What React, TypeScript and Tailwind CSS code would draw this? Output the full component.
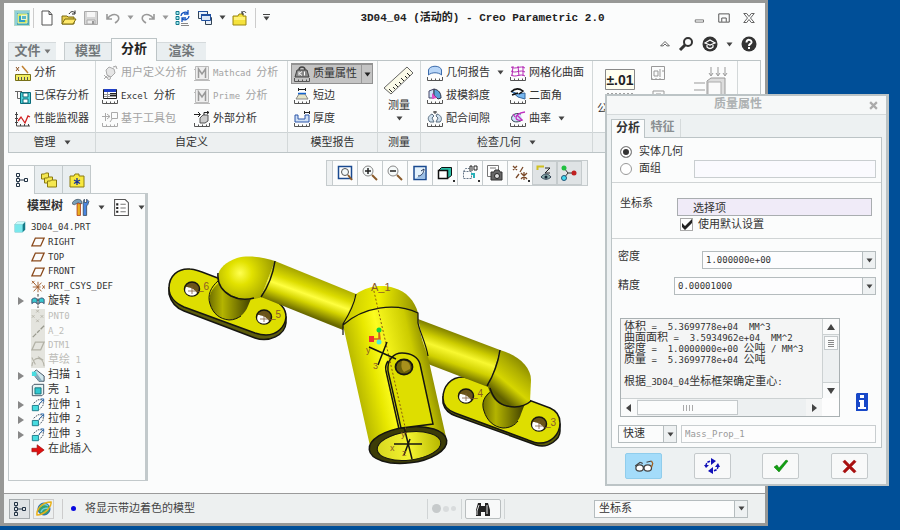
import type { ReactNode } from 'react';

// Latin runs sit at half the width of a CJK glyph, so they get the smaller mono size
function T({ children }: { children: string }) {
  const parts = children.split(/([\x20-\x7e]+)/);
  return (
    <>
      {parts.map((p, i) =>
        i % 2 ? (
          <span key={i} className="font-['DejaVu_Sans_Mono',monospace] text-[9px] whitespace-pre">
            {p}
          </span>
        ) : (
          p
        )
      )}
    </>
  );
}

function Svg({ children, size = 16, className = '' }: { children: ReactNode; size?: number; className?: string }) {
  return (
    <svg width={size} height={size} viewBox="0 0 16 16" fill="none" className={`shrink-0 ${className}`} aria-hidden="true">
      {children}
    </svg>
  );
}

function Down({ color = '#444' }: { color?: string }) {
  return (
    <svg width="7" height="5" viewBox="0 0 7 5" className="shrink-0" aria-hidden="true">
      <path d="M.5 .5h6L3.500 4.500z" fill={color} />
    </svg>
  );
}

function Ruler({ color = '#555' }: { color?: string }) {
  return <path d="M.5 12v3.500h15V12M4.500 13.500v2M8.500 13.500v2M12.500 13.500v2" stroke={color} />;
}

const icons = {
  app: (
    <>
      <path d="M0 0h16v16H0z" fill="#b5d8c8" />
      <path d="M1 1h14v14H1z" fill="#4aa9b8" />
      <path d="M1 1h14v2H1zM1 1h2v14H1z" fill="#8fd0d8" />
      <path d="M4 4h9v9H4z" fill="#c8e040" stroke="#e8f4b0" />
      <path d="M5 6h6v6H5z" fill="#2da0c8" />
      <path d="M7 5h6v5H7z" fill="#eaf6d0" />
      <path d="M8 6h4v3H8z" fill="#58b8c8" />
    </>
  ),
  newFile: <path d="M3 1h7l3 3.500V15H3zM10 1v3.500h3" fill="#fff" stroke="#555" />,
  open: (
    <>
      <path d="M1 6h5l1 1h6v7H1z" fill="#e8cf50" stroke="#7a6a10" />
      <path d="M1 14l3-5h11l-3 5z" fill="#ffe96b" stroke="#7a6a10" />
      <path d="M8 4c2-3 4-3 6-1M14 .5V4h-3" stroke="#222" />
    </>
  ),
  save: (
    <>
      <path d="M1.500 1.500h13v13h-13z" fill="#d6d6d6" stroke="#aaa" />
      <path d="M4 2h8v5H4z" fill="#f6f6f6" />
      <path d="M4 10h8v4H4z" fill="#eee" stroke="#aaa" />
      <path d="M9 11h2v3H9z" fill="#999" />
    </>
  ),
  undo: <path d="M2 4v5h5M2.500 8.500C5 5 10 3 13 6c2 3 0 5-3 7" stroke="#999" strokeWidth="1.600" />,
  redo: <path d="M14 4v5H9M13.500 8.500C11 5 6 3 3 6c-2 3 0 5 3 7" stroke="#999" strokeWidth="1.600" />,
  regen: (
    <>
      <path d="M1 1.500h3v3H1zM1 6.500h3v3H1zM1 11.500h3v3H1z" fill="#9fe8f0" stroke="#157a8c" />
      <path d="M6 13.500h7M6 15.500h8" stroke="#888" />
      <path d="M6 6c0-3 4-5 7-3M13 0v4H9M14 6c0 3-4 5-7 3M7 12V8h4" stroke="#1554c0" strokeWidth="1.300" />
    </>
  ),
  windows: (
    <>
      <path d="M1.500 1.500h9v7h-9zM8.500 7.500h6v7h-6z" fill="#e8f0fa" stroke="#345" />
      <path d="M4.500 4.500h9v6h-9z" fill="#dce8f8" stroke="#2050a0" />
      <path d="M4 4h10v2H4zM1 1h10v1H1z" fill="#2050a0" />
    </>
  ),
  folder: (
    <>
      <path d="M1 6h5l1-2h4v2h3v9H1z" fill="#f5e23c" stroke="#9a8612" />
      <path d="M2 7h11v3H2z" fill="#fff27a" />
      <path d="M10 3c1-2 3-2 4 0M10 1v3h2" stroke="#333" />
    </>
  ),
  analysis: (
    <>
      <path d="M1 2l3 4M4 2L1 6" stroke="#8a5020" />
      <path d="M7 1l6 7" stroke="#c08030" strokeWidth="1.500" />
      <path d="M.500 9.500h15v6H.500z" fill="#f0ec60" stroke="#777018" />
      <path d="M3.500 12v3M6.500 12v3M9.500 12v3M12.500 12v3" stroke="#555" />
    </>
  ),
  saved: (
    <>
      <path d="M0 3.500h7M2.500 3.500v7h4" stroke="#666" />
      <path d="M5.500 4.500h10v11h-10z" fill="#4cd0d8" stroke="#0a6a78" />
      <path d="M8 5h5v4H8zM8 11h5v4H8z" fill="#fff" stroke="#0a6a78" />
    </>
  ),
  monitor: (
    <>
      <path d="M1.500 1v14H15M0 3.500h3M0 7.500h3M0 11.500h3M5.500 13v2M9.500 13v2M13.500 13v2" stroke="#444" />
      <path d="M3 10l3-4 4 6 3-7 2 1" stroke="#d02020" strokeWidth="1.300" />
    </>
  ),
  userDef: (
    <>
      <path d="M4 5l3-3 5 2 1 4-4 4-4-2zM11 2l3-1 1 3M2 10l3 3M2 14l4-4" stroke="#aaa" fill="#e6e6e6" />
      <circle cx="7" cy="13" r="1.500" stroke="#aaa" />
    </>
  ),
  excel: (
    <>
      <path d="M1.500 1.500h13v9h-13z" fill="#fff" stroke="#222" />
      <path d="M2 1h12v3H2z" fill="#2040c8" />
      <path d="M8 5h6v3H8z" fill="#222" />
      <path d="M2 6.500h12M2 8.500h12M5.500 4v6" stroke="#999" />
      <Ruler />
    </>
  ),
  toolkit: (
    <>
      <path d="M9.500 1.500h6v6h-6zM0 5.500h8M5 3l3 2.500L5 8M3.500 2v8M10 8l-2 3" stroke="#aaa" />
      <Ruler color="#aaa" />
    </>
  ),
  mathcad: (
    <>
      <path d="M1.500 1.500h13v13h-13z" fill="#eee" stroke="#bbb" />
      <path d="M4.500 13V4l3.500 5 3.500-5v9" stroke="#999" strokeWidth="1.500" />
      <path d="M0 15.500h16M0 4.500h2" stroke="#bbb" />
    </>
  ),
  external: (
    <>
      <path d="M6 7l3-3h5v6l-3 2H6z" fill="#ccc" stroke="#555" />
      <path d="M0 3.500h6M4 1l2.500 2.500L4 6M10 4V1.500h5M13 0l2 1.500L13 3" stroke="#222" />
      <Ruler />
    </>
  ),
  mass: (
    <>
      <path d="M5 4c0-4 6-4 6 0" stroke="#444" strokeWidth="1.500" />
      <path d="M3 4h10l2 7H1z" fill="#888" stroke="#444" />
      <path d="M5 5.500v4M8 5.500l-2.500 2L8 9.500M10.500 5.500v4" stroke="#fff" />
      <Ruler />
    </>
  ),
  short: (
    <>
      <path d="M4.500 0v3M11.500 0v3M5 1.500h6" stroke="#222" />
      <path d="M5 6h6l3 5H2z" fill="#e4e4c8" stroke="#888" />
      <path d="M4 5.500h8" stroke="#1565d0" strokeWidth="1.500" />
      <Ruler />
    </>
  ),
  thick: (
    <>
      <path d="M1 4h3v4h7V4h4v7H1z" fill="#cfe0f5" stroke="#2a55a8" />
      <path d="M10.500 0v3M15.500 0v3M11 1.500h4" stroke="#222" />
      <Ruler />
    </>
  ),
  geom: (
    <>
      <path d="M1.500 10V5c1-5 12-5 13 0v5c-3-3-10-3-13 0z" fill="#b8d6f8" stroke="#3d6cac" />
      <Ruler />
    </>
  ),
  draft: (
    <>
      <path d="M2 3l5-2v9H2z" fill="#cfe4f8" stroke="#446" />
      <path d="M7 1c5 1 7 4 7 9l-3 1-4-4z" fill="#58a0d8" stroke="#334" />
      <path d="M5 5l5 5-5 1z" fill="#e050c8" />
      <Ruler />
    </>
  ),
  clearance: (
    <>
      <path d="M5 3C1 5 0 8 3 11h4L5 7l2-2zM10 3c4 1 6 5 3 8H9l2-4-2-2z" fill="#cfe0ee" stroke="#5a6e80" />
      <path d="M6 1h4M8 0v3" stroke="#333" />
      <Ruler />
    </>
  ),
  mesh: (
    <>
      <path d="M1 2c5 3 9-2 14 1M1 6c5 3 9-2 14 1M1 10c5 3 9-2 14 1M3 1l-1 10M8 1l1 10M13 1v10" stroke="#b428b4" />
      <Ruler />
    </>
  ),
  dihedral: (
    <>
      <path d="M1 3l7 3 7-1v6L8 9z" fill="#78b8f0" stroke="#3468a0" />
      <path d="M1 4c4-4 8-4 12-1l-4 3M2 7l6-2" stroke="#111" strokeWidth="1.500" />
      <Ruler />
    </>
  ),
  curvature: (
    <>
      <path d="M11 3C5 1 0 5 2 9c2 3 8 2 10 0" fill="#cfe4f8" stroke="#345" />
      <path d="M15 1C9 2 6 4 6 7c0 2 4 3 7 2M7 4l5 5M5 6l-2-3" stroke="#c030c0" strokeWidth="1.300" />
      <Ruler />
    </>
  ),
  treeNodes: <path d="M2.500 1.500h3v3h-3zM2.500 6.500h3v3h-3zM2.500 11.500h3v3h-3zM10.500 6.500h3v3h-3zM4 4.500v2M4 9.500v2M5.500 8h5" stroke="#234" />,
  folders: (
    <g fill="#f5e850" stroke="#8a7a10">
      <path d="M.500 2h3l1-1h3v6h-7z" />
      <path d="M3.500 6h3l1-1h4v6h-8z" />
      <path d="M6.500 9h3l1-1h5v7h-9z" />
    </g>
  ),
  favorite: (
    <>
      <path d="M1 4h4l1-2h4v2h5v11H1z" fill="#f8e83c" stroke="#8a7a10" />
      <path d="M8 6v7M5 8l6 3.500M11 8l-6 3.500" stroke="#14309c" strokeWidth="1.300" />
    </>
  ),
  tools: (
    <>
      <path d="M0 5c1-3 5-5 8-3l1 3H7L6 4 2 6z" fill="#7aa0b8" stroke="#456" strokeWidth=".700" />
      <path d="M4.500 5h3v10.500h-3z" fill="#e8b020" stroke="#b03010" strokeWidth=".700" />
      <path d="M10 5V3l1-2v3h2V1l2 2-1 3-1 1v8.500h-3V7z" fill="#4a86e0" stroke="#345" strokeWidth=".700" />
    </>
  ),
  list: (
    <>
      <path d="M1.500.500h10l3 3v12h-13z" fill="#fff" stroke="#555" />
      <path d="M3 5h2M3 8.500h2M3 12h2" stroke="#222" strokeWidth="2" />
      <path d="M7 5h5M7 8.500h5M7 12h5" stroke="#777" />
    </>
  ),
  part: (
    <>
      <path d="M2 5l3-3h9v9l-3 3H2z" fill="#147a88" />
      <path d="M2 5h9v9H2z" fill="#7ae8ec" />
      <path d="M2 5l3-3h9l-3 3z" fill="#c8fafa" />
    </>
  ),
  plane: <path d="M5 3.500h10L11 12.500H1z" stroke="#8a4a1c" strokeWidth="1.500" />,
  csys: <path d="M8 2v12M2 8h9M3 3l9 10M12 3L3 13M13 6l3 4M16 6l-3 4M1 1l3 3M4 1L1 4" stroke="#9a5220" />,
  revolve: (
    <>
      <path d="M1 6c3-2 4-2 6 0v5c-2-2-4-2-6 0zM9 6c3-2 4-2 6 0v5c-2-2-4-2-6 0z" fill="#38c8d0" stroke="#346" />
      <path d="M8 0v3M8 5v3M8 10v3M8 14v2" stroke="#222" />
    </>
  ),
  points: <path d="M6 1l3 3M9 1L6 4M1 7l3 3M4 7l-3 3M11 7l3 3M14 7l-3 3M6 12l3 3M9 12l-3 3" stroke="#b2b1a6" />,
  axis: <path d="M2 15l4-4M7 10l3-3M11 6l4-4" stroke="#99998e" strokeWidth="1.500" />,
  planeOff: <path d="M5 3.500h10L11 12.500H1z" stroke="#b2b1a6" strokeWidth="1.500" />,
  sketch: <path d="M1 14c1-12 13-12 14 0M1 4l4 8M8 3l6 4" stroke="#b2b1a6" strokeWidth="1.200" />,
  sweep: (
    <>
      <path d="M2 5l4-4 9 7v6H9z" fill="#cfe6ec" stroke="#345" />
      <path d="M2 5l4-1 7 10H9z" fill="#8ab" />
      <path d="M1 3h5v5H1z" fill="#48dce0" />
    </>
  ),
  shell: (
    <>
      <path d="M1.500 3.500l2-2h11v11l-2 2h-11z" fill="#e8f4f4" stroke="#345" />
      <path d="M4.500 5.500h7v7h-7z" fill="#30c8d0" stroke="#156a74" />
    </>
  ),
  extrude: (
    <>
      <path d="M1.500 8.500h7v6h-7z" fill="#48dce0" stroke="#157080" />
      <path d="M3 6l5-4h6v6l-4 5M9 8l5-6" stroke="#345" strokeDasharray="2 1" />
      <path d="M9 7l5-5M11 1h3.500v3.500" stroke="#2a6ab0" />
    </>
  ),
  insert: <path d="M1 6h6V2l8 6-8 6v-4H1z" fill="#e01010" stroke="#900" strokeWidth=".700" />,
  fit: (
    <>
      <path d="M1.500 1.500h13v12h-13z" stroke="#1a4a90" strokeWidth="1.500" fill="#fff" />
      <circle cx="8" cy="7" r="3.500" stroke="#555" fill="#f2f8fa" />
      <path d="M11 10l4 5" stroke="#8a5a2a" strokeWidth="2" />
    </>
  ),
  zoomIn: (
    <>
      <circle cx="6" cy="6" r="5" stroke="#888" fill="#f6fafa" />
      <path d="M3 6h6M6 3v6" stroke="#222" strokeWidth="1.500" />
      <path d="M10 10l5 5" stroke="#8a5a2a" strokeWidth="2" />
    </>
  ),
  zoomOut: (
    <>
      <circle cx="6" cy="6" r="5" stroke="#888" fill="#f6fafa" />
      <path d="M3 6h6" stroke="#222" strokeWidth="1.500" />
      <path d="M10 10l5 5" stroke="#8a5a2a" strokeWidth="2" />
    </>
  ),
  repaint: (
    <>
      <path d="M2 1.500h12v13H2z" fill="#e4f2fc" stroke="#1a4a90" strokeWidth="1.500" />
      <path d="M3 14l10-7v7z" fill="#9cc0e6" />
      <path d="M6 11c4 0 6-4 6-7M9 6l3-2" stroke="#235" />
    </>
  ),
  display: (
    <>
      <path d="M1.500 5.500l3-3h10v8l-4 3" fill="#28c0a8" stroke="#111" />
      <path d="M1.500 5.500h9v8h-9z" fill="#fff" stroke="#111" strokeWidth="1.500" />
    </>
  ),
  orient: (
    <>
      <path d="M1.500 6.500h8v7h-8zM1.500 6.500l2-3h4" stroke="#678" strokeDasharray="2 1" />
      <path d="M8 6V1h2v5M12 1h3v4h-3z" stroke="#222" />
      <path d="M9 9h3v4" stroke="#28b0b8" strokeWidth="2" />
    </>
  ),
  camera: (
    <>
      <path d="M.5 .5h11v11H.5zM3 3h6" fill="#fff" stroke="#777" />
      <path d="M4 7h3l1-2h4l1 2h2v8H4z" fill="#666" stroke="#333" />
      <circle cx="10" cy="11" r="2.500" fill="#ddd" stroke="#222" />
    </>
  ),
  datum: <path d="M1 1l4 4M5 1L1 5M4 13l3-4M8 7l3-5M9 8l6 6M15 8l-6 6M12 7v8" stroke="#7a4a2a" strokeWidth="1.300" />,
  annotate: (
    <>
      <path d="M8 1.500H1.500V5" stroke="#d0c020" strokeWidth="2" />
      <path d="M9 3h5l-5 5h5" stroke="#222" />
      <path d="M5 12c3-4 7-4 10 0-3 3-7 3-10 0z" fill="#8aa" stroke="#345" />
      <circle cx="10" cy="12" r="1.500" fill="#123" />
    </>
  ),
  spin: (
    <>
      <path d="M3 3l4 5-4 5M7 8h6" stroke="#333" />
      <circle cx="3" cy="3" r="2.500" fill="#20c040" />
      <circle cx="3" cy="13" r="2.500" fill="#40d8f0" stroke="#257" />
      <circle cx="13" cy="8" r="2.500" fill="#c02020" />
    </>
  ),
  globe: (
    <>
      <circle cx="8" cy="8" r="6" fill="#38a070" stroke="#2060b0" />
      <path d="M4 6c2-3 6-3 8-1M5 11c2-5 5-3 7-4" stroke="#6cd0e0" strokeWidth="1.500" />
      <path d="M1 14C0 8 7 1 15 1c1 5-7 13-14 13z" stroke="#e8b018" strokeWidth="1.500" />
    </>
  ),
  binoculars: (
    <>
      <path d="M3 2h3v3h4V2h3l2 7v6h-5v-4H6v4H1V9z" fill="#222" />
      <path d="M4 4l-2 6v4M12 4v9" stroke="#ddd" />
    </>
  ),
  glasses: (
    <>
      <path d="M1 8l4-3M7 10c1-1 1-1 2 0M5 5l2 1M10 5l4-1" stroke="#444" />
      <ellipse cx="4.500" cy="9.500" rx="3" ry="2.500" fill="#fff" stroke="#444" />
      <ellipse cx="11" cy="9.500" rx="3" ry="2.500" fill="#fff" stroke="#444" />
      <path d="M14 4l1 2-1 3" stroke="#a06020" />
    </>
  ),
  repeat: (
    <>
      <path d="M2 8c0-4 3-5 6-5M14 8c0 4-3 5-6 5" stroke="#1010b8" strokeWidth="1.500" strokeDasharray="3 1" />
      <path d="M7 0l5 3-5 4zM9 9l-5 4 5 3zM0 7h5L2 10zM11 9l3-4 2 4z" fill="#1010b8" />
    </>
  ),
  ok: <path d="M1 9l3-2 2 3 7-8 2 1-9 11z" fill="#10a010" stroke="#087008" strokeWidth=".500" />,
  cancel: <path d="M3 1l5 5 5-5 2 2-5 5 5 5-2 2-5-5-5 5-2-2 5-5-5-5z" fill="#a81010" stroke="#a81010" strokeWidth=".600" />,
};

type IconName = keyof typeof icons;

function Icon({ name, size, className }: { name: IconName; size?: number; className?: string }) {
  return (
    <Svg size={size} className={className}>
      {icons[name]}
    </Svg>
  );
}

function QuickButton({ name, label }: { name: IconName; label: string }) {
  return (
    <button aria-label={label} className="flex w-[22px] justify-center">
      <Icon name={name} />
    </button>
  );
}

function RibbonItem({ name, label, disabled = false, menu = false }: { name: IconName; label: string; disabled?: boolean; menu?: boolean }) {
  return (
    <button disabled={disabled} className="flex h-[23px] items-center gap-[3px] whitespace-nowrap disabled:text-[#a3a3a3]">
      <Icon name={name} />
      <span>
        <T>{label}</T>
      </span>
      {menu && (
        <span className="ml-1">
          <Down />
        </span>
      )}
    </button>
  );
}

function Group({ title, menu = false, className, children }: { title: string; menu?: boolean; className: string; children: ReactNode }) {
  return (
    <section className={`flex shrink-0 flex-col border-r border-[#d3d8d9] ${className}`}>
      <div className="flex h-[71px] px-[6px]">{children}</div>
      <h2 className="flex h-5 items-center justify-center gap-2 border-t border-[#cdd3d5] bg-[#edf0f1]">
        {title}
        {menu && <Down />}
      </h2>
    </section>
  );
}

function TitleBar() {
  return (
    <header className="flex h-[35px] items-center pr-[10px] pb-[6px] pl-[7px]">
      <QuickButton name="app" label="Creo" />
      <span className="mr-[2px] h-5 border-l border-[#ccc]" />
      <QuickButton name="newFile" label="新建" />
      <QuickButton name="open" label="打开" />
      <QuickButton name="save" label="保存" />
      <QuickButton name="undo" label="撤消" />
      <span className="flex w-[13px] justify-center">
        <Down color="#999" />
      </span>
      <QuickButton name="redo" label="重做" />
      <span className="flex w-[13px] justify-center">
        <Down color="#999" />
      </span>
      <QuickButton name="regen" label="重新生成" />
      <QuickButton name="windows" label="窗口" />
      <span className="flex w-[13px] justify-center">
        <Down />
      </span>
      <QuickButton name="folder" label="关闭" />
      <span className="mx-1 h-5 border-l border-[#ccc]" />
      <button aria-label="自定义" className="flex w-3 flex-col items-center gap-px">
        <span className="w-[7px] border-t border-[#444]" />
        <Down />
      </button>
      <h1 className="flex-1 text-center font-bold whitespace-nowrap text-[#222]">3D04_04 (活动的) - Creo Parametric 2.0</h1>
      <div className="flex items-center gap-[13px]">
        <button aria-label="最小化">
          <Svg size={12}>
            <path d="M3 10.500h11v3H3z" stroke="#555" />
          </Svg>
        </button>
        <button aria-label="最大化">
          <Svg size={12}>
            <path d="M1 2.500h14v11H1zM5 13V8h6v5" stroke="#555" strokeWidth="1.300" />
          </Svg>
        </button>
        <button aria-label="关闭窗口">
          <Svg size={12}>
            <path d="M1 2h4l3 4 3-4h4l-5 6 5 6h-4l-3-4-3 4H1l5-6z" stroke="#555" strokeWidth="1.200" />
          </Svg>
        </button>
      </div>
    </header>
  );
}

function RibbonTabs() {
  return (
    <nav className="flex h-[22px] pl-1 text-[13px] font-bold text-[#72777a]">
      <button className="mt-1 mr-2 flex w-12 items-center justify-center gap-[3px] border-t border-l border-[#d5dadc] bg-[#e9eef0]">
        <span>文件</span>
        <Down color="#777" />
      </button>
      <button className="mt-1 w-[47px] border-t border-l border-[#c6ccce] bg-[#e9eef0]">模型</button>
      <button className="relative -mb-px w-[46px] border border-b-0 border-[#bcc4c6] bg-[#fbfcfc] text-[#222]">分析</button>
      <button className="mt-1 w-[49px] border-t border-[#d5dadc] bg-[#e9eef0]">渲染</button>
      <div className="ml-auto flex h-3 items-center gap-2 pr-2">
        <Svg size={10}>
          <path d="M1 11l7-7 7 7h-4L8 8l-3 3z" stroke="#444" strokeWidth="1.300" />
        </Svg>
        <Svg>
          <circle cx="10" cy="6" r="4" stroke="#333" strokeWidth="2" />
          <path d="M7 9l-5 5" stroke="#333" strokeWidth="3" />
        </Svg>
        <Svg>
          <circle cx="8" cy="8" r="7.500" fill="#333" />
          <path d="M3 7l5-3 5 3-5 2zM5 9v2c2 2 4 2 6 0V9" stroke="#fff" fill="#333" strokeWidth="1.200" />
        </Svg>
        <Down />
        <Svg>
          <circle cx="8" cy="8" r="7.500" fill="#333" />
          <path d="M5.500 6.500c0-4 5.500-3 5 0C10 8 8 8 8 10M8 11v2" stroke="#fff" strokeWidth="2" />
        </Svg>
      </div>
    </nav>
  );
}

function Ribbon() {
  return (
    <div className="mr-1 ml-1 flex overflow-hidden border border-[#bcc4c6]">
      <Group title="管理" menu className="w-[87px]">
        <div>
          <RibbonItem name="analysis" label="分析" />
          <RibbonItem name="saved" label="已保存分析" />
          <RibbonItem name="monitor" label="性能监视器" />
        </div>
      </Group>
      <Group title="自定义" className="w-48">
        <div className="w-[92px]">
          <RibbonItem name="userDef" label="用户定义分析" disabled />
          <RibbonItem name="excel" label="Excel 分析" />
          <RibbonItem name="toolkit" label="基于工具包" disabled />
        </div>
        <div>
          <RibbonItem name="mathcad" label="Mathcad 分析" disabled />
          <RibbonItem name="mathcad" label="Prime 分析" disabled />
          <RibbonItem name="external" label="外部分析" />
        </div>
      </Group>
      <Group title="模型报告" className="w-[90px]">
        <div>
          <div className="mt-[2px] -ml-[3px] flex h-[21px] border border-t-2 border-[#929292] bg-[#c4c4c4]">
            <button className="flex w-[69px] items-center gap-[3px] pl-[2px]">
              <Icon name="mass" />
              质量属性
            </button>
            <button aria-label="质量属性选项" className="flex w-[11px] items-center justify-center border-l border-[#999]">
              <Down color="#222" />
            </button>
          </div>
          <RibbonItem name="short" label="短边" />
          <RibbonItem name="thick" label="厚度" />
        </div>
      </Group>
      <Group title="测量" className="w-[43px]">
        <button className="flex w-full flex-col items-center gap-1 pt-[5px]">
          <svg width="32" height="30" viewBox="0 0 32 30" aria-hidden="true">
            <path d="M1 22L24 1l6 6L8 28z" fill="#fafae8" stroke="#666" />
            <path d="M9 26l-3-3M12 23l-2-2M15 21l-3-3M18 18l-2-2M21 15l-3-3M24 12l-2-2M27 10l-3-3" stroke="#222" />
          </svg>
          <span className="leading-3">测量</span>
          <Down />
        </button>
      </Group>
      <Group title="检查几何" menu className="w-[172px]">
        <div className="w-[83px]">
          <RibbonItem name="geom" label="几何报告" menu />
          <RibbonItem name="draft" label="拔模斜度" />
          <RibbonItem name="clearance" label="配合间隙" />
        </div>
        <div>
          <RibbonItem name="mesh" label="网格化曲面" />
          <RibbonItem name="dihedral" label="二面角" />
          <RibbonItem name="curvature" label="曲率" menu />
        </div>
      </Group>
      <Group title="" className="w-[145px]">
        <div className="flex flex-col gap-1 pt-2 pl-[6px]">
          <svg width="30" height="28" viewBox="0 0 30 28" aria-hidden="true">
            <path d="M.5.500h29v20H.500z" fill="#fffff0" stroke="#888" />
            <text x="15" y="16" textAnchor="middle" fontSize="14" fontWeight="bold" fill="#222" fontFamily="Liberation Sans, sans-serif">
              ±.01
            </text>
            <path d="M1 27h28M3 24v3M7 24v3M11 24v3M15 24v3M19 24v3M23 24v3M27 24v3" stroke="#444" />
          </svg>
          <span className="-ml-2">公差</span>
        </div>
        <div className="ml-[15px] flex flex-col gap-[7px] pt-1">
          <Svg>
            <path d="M1.500 1.500h13v13h-13zM4 6h4v5H4zM10 4v8M12 6h2M2 15v-2M6 15v-2M10 15v-2" stroke="#999" />
          </Svg>
          <Svg>
            <path d="M3 3h11v11H3zM6 6h5v5H6z" stroke="#999" />
          </Svg>
        </div>
        <svg width="36" height="40" viewBox="0 0 36 40" className="mt-[6px] ml-7" aria-hidden="true">
          <path d="M17 0v8M24 0v8M31 0v8M15 6l2 3 2-3M22 6l2 3 2-3M29 6l2 3 2-3M0 16h11M0 23h11M0 30h11" stroke="#999" fill="none" />
          <path d="M13 14l4-3h14v29H13z" fill="#ddd" stroke="#999" />
          <path d="M14 15h13v25H14z" fill="#fafafa" stroke="#aaa" />
        </svg>
      </Group>
    </div>
  );
}

type TreeNode = { icon: IconName; label: string; expand?: boolean; off?: boolean };

const tree: TreeNode[] = [
  { icon: 'plane', label: 'RIGHT' },
  { icon: 'plane', label: 'TOP' },
  { icon: 'plane', label: 'FRONT' },
  { icon: 'csys', label: 'PRT_CSYS_DEF' },
  { icon: 'revolve', label: '旋转 1', expand: true },
  { icon: 'points', label: 'PNT0', off: true },
  { icon: 'axis', label: 'A_2', off: true },
  { icon: 'planeOff', label: 'DTM1', off: true },
  { icon: 'sketch', label: '草绘 1', off: true },
  { icon: 'sweep', label: '扫描 1', expand: true },
  { icon: 'shell', label: '壳 1' },
  { icon: 'extrude', label: '拉伸 1', expand: true },
  { icon: 'extrude', label: '拉伸 2', expand: true },
  { icon: 'extrude', label: '拉伸 3', expand: true },
  { icon: 'insert', label: '在此插入' },
];

function ModelTree() {
  return (
    <aside className="flex w-[140px] shrink-0 flex-col pt-3 pb-3">
      <div className="flex h-7">
        <button aria-label="模型树" className="relative -mb-px flex w-[27px] items-center justify-center border border-b-0 border-[#c2c9cb] bg-[#fbfcfc]">
          <Icon name="treeNodes" />
        </button>
        <button aria-label="文件夹浏览器" className="flex w-7 items-center justify-center border-t border-r border-[#c2c9cb] bg-[#e9eef0]">
          <Icon name="folders" />
        </button>
        <button aria-label="收藏夹" className="flex w-7 items-center justify-center border-t border-r border-[#c2c9cb] bg-[#e9eef0]">
          <Icon name="favorite" />
        </button>
      </div>
      <div className="flex-1 border border-r-[3px] border-[#c2c9cb]">
        <div className="flex h-[26px] items-center pl-[18px]">
          <h2 className="text-xs font-bold">模型树</h2>
          <button aria-label="设置" className="ml-[9px] flex items-center gap-2">
            <Icon name="tools" size={18} />
            <Down />
          </button>
          <button aria-label="显示" className="ml-2 flex items-center gap-2">
            <Icon name="list" size={17} />
            <Down />
          </button>
        </div>
        <ul className="grid h-[237px] auto-rows-fr leading-none">
          <li className="flex items-center gap-1 pl-1">
            <Icon name="part" size={14} />
            <span>
              <T>3D04_04.PRT</T>
            </span>
          </li>
          {tree.map((node) => (
            <li key={node.label} className={`flex items-center pl-[9px] ${node.off ? 'text-[#bdbdb8]' : ''}`}>
              <span className="flex w-[13px]">
                {node.expand && (
                  <svg width="6" height="8" viewBox="0 0 6 8" aria-hidden="true">
                    <path d="M0 0l6 4-6 4z" fill="#888" />
                  </svg>
                )}
              </span>
              <span className={`flex items-center self-stretch ${node.off ? 'bg-[#e4e4de]' : ''}`}>
                <Icon name={node.icon} size={14} />
              </span>
              <span className="ml-[3px] whitespace-nowrap">
                <T>{node.label}</T>
              </span>
            </li>
          ))}
        </ul>
      </div>
    </aside>
  );
}

const viewTools: { icon: IconName; label: string; pressed?: boolean; more?: boolean }[] = [
  { icon: 'fit', label: '重新调整' },
  { icon: 'zoomIn', label: '放大' },
  { icon: 'zoomOut', label: '缩小' },
  { icon: 'repaint', label: '重画' },
  { icon: 'display', label: '显示样式', more: true },
  { icon: 'orient', label: '已命名视图', more: true },
  { icon: 'camera', label: '视图管理器' },
  { icon: 'datum', label: '基准显示', more: true },
  { icon: 'annotate', label: '注释显示', pressed: true },
  { icon: 'spin', label: '旋转中心', pressed: true },
];

function Hole({ x, y }: { x: number; y: number }) {
  return (
    <g>
      <ellipse cx={x} cy={y} rx="7.500" ry="7" fill="#6a5418" stroke="#151510" strokeWidth="1.500" />
      <path d={`M${x - 6} ${y - 2}c3 0 9 2 11 6-2 3-6 3-8 2-3-1-5-4-3-8z`} fill="#fff" />
      <path d={`M${x - 4} ${y + 2}h9M${x} ${y - 3}v8`} stroke="#806040" strokeWidth=".800" />
    </g>
  );
}

function Model() {
  return (
    <svg width="410" height="230" viewBox="160 240 410 230" fill="none" role="img" aria-label="3D04_04">
      <defs>
        <linearGradient id="pipeL" gradientUnits="userSpaceOnUse" x1="315" y1="276" x2="302" y2="312">
          <stop offset="0" stopColor="#a8a800" />
          <stop offset=".3" stopColor="#dcdc00" />
          <stop offset=".5" stopColor="#ffff40" />
          <stop offset=".7" stopColor="#d4d400" />
          <stop offset="1" stopColor="#686800" />
        </linearGradient>
        <linearGradient id="pipeR" gradientUnits="userSpaceOnUse" x1="468" y1="336" x2="454" y2="376">
          <stop offset="0" stopColor="#808000" />
          <stop offset=".25" stopColor="#cccc00" />
          <stop offset=".45" stopColor="#f8f830" />
          <stop offset=".7" stopColor="#d0d000" />
          <stop offset="1" stopColor="#5c5c00" />
        </linearGradient>
        <radialGradient id="elbowL" gradientUnits="userSpaceOnUse" cx="240" cy="272" r="34">
          <stop offset="0" stopColor="#ffff50" />
          <stop offset=".35" stopColor="#e2e200" />
          <stop offset="1" stopColor="#a0a000" />
        </radialGradient>
        <linearGradient id="elbowR" gradientUnits="userSpaceOnUse" x1="528" y1="354" x2="496" y2="392">
          <stop offset="0" stopColor="#707000" />
          <stop offset=".4" stopColor="#b0b000" />
          <stop offset=".7" stopColor="#d6d600" />
          <stop offset="1" stopColor="#606000" />
        </linearGradient>
        <linearGradient id="boss" x1="0" y1="0" x2="1" y2="0">
          <stop offset="0" stopColor="#707000" />
          <stop offset=".3" stopColor="#b4b400" />
          <stop offset=".6" stopColor="#808000" />
          <stop offset="1" stopColor="#383800" />
        </linearGradient>
        <linearGradient id="body" gradientUnits="userSpaceOnUse" x1="356" y1="385" x2="438" y2="366">
          <stop offset="0" stopColor="#b8b800" />
          <stop offset=".25" stopColor="#e8e800" />
          <stop offset=".4" stopColor="#fcfc20" />
          <stop offset=".75" stopColor="#cccc00" />
          <stop offset="1" stopColor="#747400" />
        </linearGradient>
        <linearGradient id="dome" gradientUnits="userSpaceOnUse" x1="352" y1="300" x2="418" y2="305">
          <stop offset="0" stopColor="#d0d000" />
          <stop offset=".4" stopColor="#f0f000" />
          <stop offset="1" stopColor="#909000" />
        </linearGradient>
        <linearGradient id="bore" gradientUnits="userSpaceOnUse" x1="378" y1="440" x2="440" y2="440">
          <stop offset="0" stopColor="#d8d820" />
          <stop offset=".5" stopColor="#f4f430" />
          <stop offset="1" stopColor="#b8b800" />
        </linearGradient>
      </defs>

      {/* left mounting plate */}
      <g stroke="#151510" strokeWidth="1.500">
        <path d="M169 287v6c2 8 7 14 15 17l71 27c14 5 30-3 31-15v-6z" fill="#5c5c0c" />
        <path d="M169 287c0-12 9-20 21-19 5 0 8 2 12 3l68 26c10 4 16 11 16 19-1 10-9 18-20 18-4 0-8-1-11-2l-71-26c-9-4-15-11-15-19z" fill="#dede00" />
      </g>
      <Hole x={192} y={288} />
      <Hole x={264} y={316} />
      <path d="M219 282c-8 6-11 13-9 21 3 10 10 15 19 16 9 0 16-6 19-14l5-12z" fill="url(#boss)" />
      <path d="M218 280c-7 6-11 14-8 23 3 10 10 15 19 16 5 0 9-2 12-4" stroke="#151510" />
      <path d="M261 296l-10-3-20 2 10 5z" fill="#5c5c00" />
      <path d="M275 260l81 33-13 36-82-33z" fill="url(#pipeL)" />
      <path d="M218 280c-2-12 8-19 19-23 11-3 25-1 38 3l-14 36c-9 4-21 3-30-2-7-4-12-9-13-14z" fill="url(#elbowL)" />
      <path d="M218 272c-1 10 4 18 13 23 8 4 16 4 23 2M275 260c-2 13-7 26-14 36" stroke="#151510" strokeWidth="1.500" />

      {/* right mounting plate */}
      <g stroke="#151510" strokeWidth="1.500">
        <path d="M443 396v6c2 8 7 11 13 13l80 29c13 4 24-6 24-14v-7z" fill="#5c5c0c" />
        <path d="M443 397c0-12 8-21 20-21 4 0 8 2 12 3l75 28c7 3 10 9 10 15 0 11-9 21-22 20-4 0-7-2-10-3l-73-27c-8-3-12-9-12-15z" fill="#dede00" />
      </g>
      <Hole x={466} y={395} />
      <Hole x={539} y={423} />
      <path d="M492 389c-8 5-11 13-8 21 3 10 10 16 19 17 9 0 16-6 18-14l5-13z" fill="url(#boss)" />
      <path d="M492 390c-8 5-11 12-8 20 3 10 10 16 19 17 7 0 12-3 15-7" stroke="#151510" />
      <path d="M418 318l82 31-12 37-60-23z" fill="url(#pipeR)" />
      <path d="M500 349c18 5 31 17 31 30l-1 22c-7 6-17 6-25 4-9-3-14-9-17-19z" fill="url(#elbowR)" />
      <path d="M500 349c-2 13-7 26-13 36M490 387c3 10 8 16 17 18 9 2 17 1 24-5" stroke="#151510" strokeWidth="1.500" />

      {/* main tube */}
      <path d="M356 293c12-8 26-10 38-6 12 3 21 13 24 25l-22 14-53-2c4-10 9-20 13-31z" fill="url(#dome)" />
      <path d="M343 324c20-18 52-23 75-12 0 15 5 30 10 44l18 80-38 22-38-13z" fill="url(#body)" />
      <path d="M356 293c-2 12-8 22-13 30v11M343 324c20-18 52-23 75-12v10c2 10 8 20 10 33" stroke="#151510" strokeWidth="1.200" />
      <ellipse cx="408" cy="444" rx="39" ry="18" transform="rotate(-7 408 444)" fill="#3c3c08" stroke="#151510" strokeWidth="1.500" />
      <ellipse cx="409" cy="445" rx="32" ry="14" transform="rotate(-7 409 445)" fill="url(#bore)" stroke="#151510" />
      <path d="M386 367c1-10 8-15 16-15 9 0 16 4 18 11l13 60-31 4z" fill="#dede00" />
      <path d="M401 427l-13-57c-1-12 6-18 14-18 9 0 16 4 18 11l13 60-32 4M388 360c-2 3-3 6-2 10l13 58" stroke="#151510" strokeWidth="1.500" />
      <ellipse cx="404" cy="366" rx="8.500" ry="7.500" fill="#6a6008" stroke="#151510" strokeWidth="1.800" />
      <path d="M402 360c6-1 9 4 8 8l-6 3c-3-3-3-7-2-11z" fill="#a8901c" />

      {/* datums */}
      <path d="M373 286l33 144" stroke="#8a5a10" strokeDasharray="2 2" />
      <path d="M369 346l27 12M387 341l-9 23M394 443h28M410 438l-6 16M404 426l8 32" stroke="#151510" strokeWidth="1.500" />
      <path d="M371 338h9l-1-9v12" stroke="#d06020" strokeWidth="1.500" />
      <rect x="369" y="335" width="5" height="6" fill="#f03030" />
      <circle cx="379" cy="329" r="2.500" fill="#10d040" />
      <circle cx="379" cy="341" r="2.500" fill="#50e8d8" />
      <g fill="#8a5a28" fontFamily="Liberation Sans, sans-serif" fontSize="10">
        <text x="371" y="290" fontSize="11">
          A_1
        </text>
        <text x="198" y="289">
          _6
        </text>
        <text x="270" y="317">
          _5
        </text>
        <text x="472" y="396">
          _4
        </text>
        <text x="545" y="425">
          _3
        </text>
        <text x="366" y="352" fontSize="9">
          y
        </text>
        <text x="373" y="368" fontSize="9">
          3
        </text>
        <text x="390" y="450" fontSize="9">
          x
        </text>
        <text x="402" y="455" fontSize="9">
          z
        </text>
        <text x="401" y="436" fontSize="9">
          y
        </text>
      </g>
    </svg>
  );
}

function Viewport() {
  return (
    <main className="flex flex-1 flex-col pt-[7px]">
      <div className="flex h-[26px] self-center border border-[#c5cbcd] bg-[#fbfcfc]" role="toolbar">
        <span className="w-[5px] bg-[#edf0f1]" />
        {viewTools.map((tool) => (
          <button
            key={tool.icon}
            aria-label={tool.label}
            className={`relative flex w-[25px] items-center justify-center border-l border-[#c5cbcd] ${tool.pressed ? 'border border-[#9ea4a6] bg-[#dfe3e5]' : ''}`}
          >
            <Icon name={tool.icon} />
            {tool.more && <span className="absolute right-[2px] bottom-[3px] size-[2px] bg-[#333]" />}
          </button>
        ))}
        <span className="w-[5px] bg-[#edf0f1]" />
      </div>
      <div className="mt-[55px] ml-3">
        <Model />
      </div>
    </main>
  );
}

function StatusBar() {
  return (
    <footer className="flex h-[30px] items-center border-t border-[#9a9a9a] bg-[#edf0f0] pl-[5px]">
      <button aria-label="模型树开关" className="flex h-5 w-[21px] items-center justify-center border border-[#a5abad] bg-[#dfe3e5]">
        <Icon name="treeNodes" />
      </button>
      <button aria-label="浏览器开关" className="ml-[3px] flex h-5 w-[21px] items-center justify-center border border-[#ccc]">
        <Icon name="globe" />
      </button>
      <span className="mx-2 h-5 border-l border-[#ccc]" />
      <span className="size-[5px] rounded-sm bg-[#0808e0]" />
      <p className="ml-[9px] flex-1 text-[#444]">将显示带边着色的模型</p>
      <span className="h-5 border-l border-[#d0d4d5]" />
      <span className="ml-1 size-[9px] rounded-full bg-[#c6cacb]" />
      <span className="ml-[2px] size-[6px] rounded-full bg-[#d9dcdd]" />
      <span className="mx-[2px] size-[5px] rounded-full bg-[#d9dcdd]" />
      <span className="mx-[3px] h-5 border-l border-[#d0d4d5]" />
      <button aria-label="查找" className="flex h-5 w-9 items-center justify-center rounded-xs border border-[#b9bebf] bg-[#f8f9f9]">
        <Icon name="binoculars" />
      </button>
      <span className="mx-[3px] h-5 border-l border-[#d0d4d5]" />
      <div className="mr-[17px] ml-[86px]">
        <SelectBox label="选择过滤器" value="坐标系" className="w-[154px]" />
      </div>
    </footer>
  );
}

function ArrowBox() {
  return (
    <span className="flex w-[13px] items-center justify-center border-l border-[#b5bcbe] bg-[#eef1f2]">
      <Down />
    </span>
  );
}

function SelectBox({ label, value, className }: { label: string; value: string; className: string }) {
  return (
    <div className={`relative flex h-[18px] border border-[#b5bcbe] bg-[#fbfcfc] ${className}`}>
      <select aria-label={label} className="w-full appearance-none pl-1 outline-none">
        <option>{value}</option>
      </select>
      <span className="pointer-events-none absolute inset-y-0 right-0 flex">
        <ArrowBox />
      </span>
    </div>
  );
}

function Combo({ id, value, className }: { id: string; value: string; className: string }) {
  return (
    <div className={`flex h-[18px] border border-[#b5bcbe] bg-[#fdfdfe] ${className}`}>
      <input id={id} defaultValue={value} className="w-0 flex-1 pl-[3px] font-['DejaVu_Sans_Mono',monospace] text-[9px] outline-none" />
      <button aria-label="展开" className="flex">
        <span className="flex h-full">
          <ArrowBox />
        </span>
      </button>
    </div>
  );
}

const report = `体积 =  5.3699778e+04  MM^3
曲面面积 =  3.5934962e+04  MM^2
密度 =  1.0000000e+00 公吨 / MM^3
质量 =  5.3699778e+04 公吨

根据_3D04_04坐标框架确定重心:`;

function Arrow({ d }: { d: string }) {
  return (
    <svg width="8" height="8" viewBox="0 0 8 8" aria-hidden="true">
      <path d={d} fill="#444" />
    </svg>
  );
}

function MassDialog() {
  const field = 'h-[18px] border border-[#c9ced0] outline-none';
  const action = 'flex h-[26px] w-[37px] items-center justify-center rounded-xs border border-[#c4c9cb] bg-[#f8f9f9]';
  return (
    <div role="dialog" aria-label="质量属性" className="absolute top-[94px] right-[11px] w-[284px] border-2 border-r-[3px] border-[#bcc4c6] bg-[#edf1f2]">
      <div className="flex h-[19px] items-center border-b border-[#d5dadb] bg-[#f6f8f8] pr-2 text-[#adb1b2]">
        <h2 className="flex-1 text-center text-xs font-bold">质量属性</h2>
        <button aria-label="关闭">
          <Svg size={9}>
            <path d="M2 2l12 12M14 2L2 14" stroke="#aaa" strokeWidth="4" />
          </Svg>
        </button>
      </div>
      <div className="mx-1 mt-1 flex h-[18px] text-xs font-bold">
        <button className="relative -mb-px w-[34px] border border-b-0 border-[#bcc4c6] bg-[#fbfcfc]">分析</button>
        <button className="w-9 border-r border-[#d5dadb] text-[#8a8f91]">特征</button>
      </div>
      <div className="mx-1 border border-[#bcc4c6] bg-[#fbfcfc]">
        <div className="grid grid-cols-[74px_1fr] items-center border-b border-[#d0d4d5] pt-[5px] pr-[5px] pb-1 pl-2">
          <label className="col-span-2 flex h-[17px] items-center gap-[7px]">
            <input type="radio" name="kind" defaultChecked className="size-3 appearance-none rounded-full border border-[#888] bg-[#333] shadow-[inset_0_0_0_2px_#fff]" />
            实体几何
          </label>
          <label className="flex items-center gap-[7px]">
            <input type="radio" name="kind" className="size-3 appearance-none rounded-full border border-[#999] bg-white" />
            面组
          </label>
          <input aria-label="面组" className={`${field} w-full bg-[#fafafe]`} />
        </div>
        <div className="grid grid-cols-[57px_1fr] border-b border-[#d0d4d5] pt-[15px] pr-[9px] pb-[5px] pl-2">
          <label htmlFor="csys" className="h-[18px] leading-3">
            坐标系
          </label>
          <input id="csys" defaultValue="选择项" className="h-[18px] w-full border border-[#a9adb0] bg-[#f0ebf8] pl-[15px] outline-none" />
          <label className="col-start-2 flex h-[17px] items-center gap-[5px] pl-[3px]">
            <span className="relative flex">
              <input type="checkbox" defaultChecked className="size-[13px] appearance-none border border-[#aaa] bg-white" />
              <svg width="13" height="13" viewBox="0 0 13 13" className="pointer-events-none absolute inset-0" aria-hidden="true">
                <path d="M2 5l3 3 7-7v4l-7 7-3-3z" fill="#222" />
              </svg>
            </span>
            使用默认设置
          </label>
        </div>
        <div className="flex flex-col gap-2 pt-3 pr-[5px] pb-[23px] pl-[6px]">
          <div className="flex">
            <label htmlFor="density" className="flex-1 leading-3">
              密度
            </label>
            <Combo id="density" value="1.000000e+00" className="w-[174px]" />
          </div>
          <div className="flex items-center">
            <label htmlFor="accuracy" className="flex-1">
              精度
            </label>
            <Combo id="accuracy" value="0.00001000" className="w-[202px]" />
          </div>
        </div>
        <div className="flex items-end justify-between pr-[13px] pl-2">
          <div className="grid w-[220px] grid-cols-[1fr_17px] grid-rows-[79px_18px] border border-[#a9b0b2] bg-[#f4f5f5]">
            <output className="block overflow-hidden pt-[3px] pl-[3px] leading-[11px] whitespace-pre">
              <T>{report}</T>
            </output>
            <div className="flex flex-col border-l border-[#ccd1d2] bg-[#edf0f1]">
              <button aria-label="向上" className="flex h-4 items-center justify-center border-b border-[#ccd1d2] bg-[#fafbfb]">
                <Arrow d="M4 1l4 6H0z" />
              </button>
              <span className="m-px flex h-[14px] flex-col items-center justify-center gap-px border border-[#c4c9cb] bg-[#fbfcfc]">
                <span className="w-[6px] border-t border-[#888]" />
                <span className="w-[6px] border-t border-[#888]" />
                <span className="w-[6px] border-t border-[#888]" />
                <span className="w-[6px] border-t border-[#888]" />
              </span>
              <button aria-label="向下" className="mt-auto flex h-4 items-center justify-center border-t border-[#ccd1d2] bg-[#fafbfb]">
                <Arrow d="M0 1h8L4 7z" />
              </button>
            </div>
            <div className="flex border-t border-[#ccd1d2] bg-[#edf0f1]">
              <button aria-label="向左" className="flex w-4 items-center justify-center bg-[#fafbfb]">
                <Arrow d="M6 0v8L1 4z" />
              </button>
              <span className="my-px flex w-[101px] items-center justify-center gap-[2px] border border-[#c4c9cb] bg-[#fbfcfc]">
                <span className="h-[6px] border-l border-[#aaa]" />
                <span className="h-[6px] border-l border-[#aaa]" />
                <span className="h-[6px] border-l border-[#aaa]" />
                <span className="h-[6px] border-l border-[#aaa]" />
              </span>
              <button aria-label="向右" className="ml-auto flex w-4 items-center justify-center bg-[#f4f5f5]">
                <Arrow d="M2 0v8l5-4z" />
              </button>
            </div>
            <span className="bg-[#fdfdfd]" />
          </div>
          <button aria-label="信息" className="mb-[6px]">
            <svg width="12" height="18" viewBox="0 0 12 18" aria-hidden="true">
              <path d="M0 1l1-1h11v17l-1 1H0z" fill="#1848c8" />
              <path d="M4 2h4v3H4zM3 7h5v7h2v2H2v-2h2V9H3z" fill="#fff" />
            </svg>
          </button>
        </div>
        <div className="flex gap-1 pt-2 pr-[5px] pb-1 pl-[6px]">
          <SelectBox label="分析类型" value="快速" className="w-[59px]" />
          <input
            aria-label="名称"
            defaultValue="Mass_Prop_1"
            className={`${field} w-0 flex-1 bg-[#fdfdfd] pl-[3px] font-['DejaVu_Sans_Mono',monospace] text-[9px] text-[#999]`}
          />
        </div>
      </div>
      <div className="flex justify-between px-[18px] pt-[5px] pb-[5px]">
        <button aria-label="预览" className="flex h-[26px] w-[37px] items-center justify-center rounded-xs border border-[#90cdec] bg-[#a4dcfa]">
          <Icon name="glasses" size={20} />
        </button>
        <button aria-label="重复" className={action}>
          <Icon name="repeat" />
        </button>
        <button aria-label="确定" className={action}>
          <Icon name="ok" />
        </button>
        <button aria-label="取消" className={action}>
          <Icon name="cancel" size={15} />
        </button>
      </div>
    </div>
  );
}

export default function App() {
  return (
    <div className="relative flex min-h-screen bg-[#004f98] pb-1 font-['Liberation_Mono','Noto_Sans_CJK_SC',monospace] text-[11px] leading-4 text-[#333]">
      <div className="mr-[132px] flex flex-1 flex-col overflow-hidden border-[3px] border-l-4 border-[#979896] bg-[#fbfcfc]">
        <TitleBar />
        <RibbonTabs />
        <Ribbon />
        <div className="flex flex-1 pl-1">
          <ModelTree />
          <Viewport />
        </div>
        <StatusBar />
      </div>
      <MassDialog />
    </div>
  );
}
